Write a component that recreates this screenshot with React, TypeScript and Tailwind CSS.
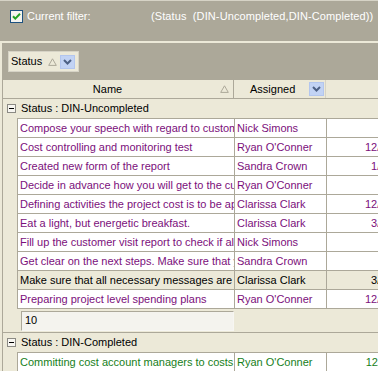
import React from "react";

type Task = { name: string; who: string; date: string; sel?: boolean };

const open: Task[] = [
  { name: "Compose your speech with regard to customer's needs", who: "Nick Simons", date: "" },
  { name: "Cost controlling and monitoring test", who: "Ryan O'Conner", date: "12/14/2007" },
  { name: "Created new form of the report", who: "Sandra Crown", date: "1/21/2008" },
  { name: "Decide in advance how you will get to the customer's office", who: "Ryan O'Conner", date: "" },
  { name: "Defining activities the project cost is to be applied to", who: "Clarissa Clark", date: "12/10/2007" },
  { name: "Eat a light, but energetic breakfast.", who: "Clarissa Clark", date: "3/12/2008" },
  { name: "Fill up the customer visit report to check if all is done", who: "Nick Simons", date: "" },
  { name: "Get clear on the next steps. Make sure that you know them", who: "Sandra Crown", date: "" },
  { name: "Make sure that all necessary messages are delivered", who: "Clarissa Clark", date: "3/18/2008", sel: true },
  { name: "Preparing project level spending plans", who: "Ryan O'Conner", date: "12/20/2007" },
];

const done: Task[] = [
  { name: "Committing cost account managers to costs", who: "Ryan O'Conner", date: "12/11/2007" },
];

function Check() {
  return (
    <svg width="13" height="13" viewBox="0 0 13 13" className="shrink-0">
      <rect x="0.5" y="0.5" width="12" height="12" fill="#f4f4ef" stroke="#1c5180" />
      <path d="M3 6.2 L5.3 8.6 L10 3.8" fill="none" stroke="#21a121" strokeWidth="2" />
    </svg>
  );
}

function DropBtn() {
  return (
    <svg width="15" height="14" viewBox="0 0 15 14" className="shrink-0">
      <rect x="0.5" y="0.5" width="14" height="13" fill="#c2d3f4" stroke="#b3c6ee" />
      <path d="M4 5 L7.5 8.5 L11 5" fill="none" stroke="#4d6185" strokeWidth="2" />
    </svg>
  );
}

function SortUp() {
  return (
    <svg width="9" height="8" viewBox="0 0 9 8" className="shrink-0">
      <path d="M4.5 0.8 L8.3 7.4 L0.7 7.4 Z" fill="none" stroke="#aca899" />
    </svg>
  );
}

function Minus() {
  return (
    <svg width="9" height="9" viewBox="0 0 9 9" className="shrink-0">
      <rect x="0.5" y="0.5" width="8" height="8" fill="#f7f6f1" stroke="#8b8a84" />
      <path d="M2 4.5 H7" stroke="#000" />
    </svg>
  );
}

function GroupRow({ label }: { label: string }) {
  return (
    <div className="flex h-[19px] items-center gap-[5px] pl-[4px] text-black">
      <Minus />
      <span>{label}</span>
    </div>
  );
}

function Rows({ items, tone }: { items: Task[]; tone: string }) {
  return (
    <div className="ml-[14px] border-t border-[#aca899]">
      {items.map((t) => (
        <div
          key={t.name}
          className={`flex h-[19px] border-b border-[#aca899] ${t.sel ? "bg-[#ece9d8] text-black" : `bg-white ${tone}`}`}
        >
          <div className="w-[218px] shrink-0 overflow-hidden whitespace-nowrap border-x border-[#aca899] pl-[2px] leading-[18px]">
            {t.name}
          </div>
          <div className="w-[92px] shrink-0 overflow-hidden whitespace-nowrap border-r border-[#aca899] pl-[2px] leading-[18px]">
            {t.who}
          </div>
          <div className="w-[96px] shrink-0 overflow-hidden whitespace-nowrap pr-[3px] text-right leading-[18px]">
            {t.date}
          </div>
        </div>
      ))}
    </div>
  );
}

export default function App() {
  return (
    <div className="h-[371px] w-[378px] overflow-hidden bg-[#ece9d8] font-['Liberation_Sans',Arial,sans-serif] text-[11px]">
      <div className="flex h-[41px] items-start gap-[4px] border-t border-[#d6d3c6] bg-[#aca899] pl-[10px] pt-[9px] text-white">
        <Check />
        <span className="w-[120px] leading-[13px]">Current filter:</span>
        <span className="leading-[13px] tracking-[0.1px]">(Status&nbsp;&nbsp;(DIN-Uncompleted,DIN-Completed))</span>
      </div>
      <div className="ml-[2px] mt-[2px]">
        <div className="flex h-[37px] items-center bg-[#aca899] pl-[6px]">
          <div className="flex h-[21px] w-[71px] items-center gap-[6px] border border-[#d6d3c6] bg-[#ece9d8] pl-[2px] text-black">
            <span>Status</span>
            <div className="flex items-center gap-[3px]">
              <SortUp />
              <DropBtn />
            </div>
          </div>
        </div>
        <div className="border-l border-[#aca899]">
          <div className="flex h-[19px] items-center border-b border-[#aca899] bg-[#ece9d8] text-black">
            <div className="flex h-full w-[231px] shrink-0 items-center border-r border-[#aca899] pr-[4px]">
              <span className="flex-1 pr-[8px] text-center">Name</span>
              <SortUp />
            </div>
            <div className="flex h-full w-[92px] shrink-0 items-center justify-between border-r border-[#d6d3c6] pl-[16px] pr-[1px]">
              <span>Assigned</span>
              <DropBtn />
            </div>
          </div>
          <GroupRow label="Status : DIN-Uncompleted" />
          <Rows items={open} tone="text-[#7b0f7b]" />
          <div className="flex h-[24px] items-center border-b border-[#aca899] pl-[18px]">
            <div className="flex h-[20px] w-[213px] items-center border border-t-[#aca899] border-l-[#aca899] border-r-[#f7f6f2] border-b-[#f7f6f2] bg-[#f4f3ee] pl-[3px] text-black">
              10
            </div>
          </div>
          <GroupRow label="Status : DIN-Completed" />
          <Rows items={done} tone="text-[#17801a]" />
        </div>
      </div>
    </div>
  );
}
